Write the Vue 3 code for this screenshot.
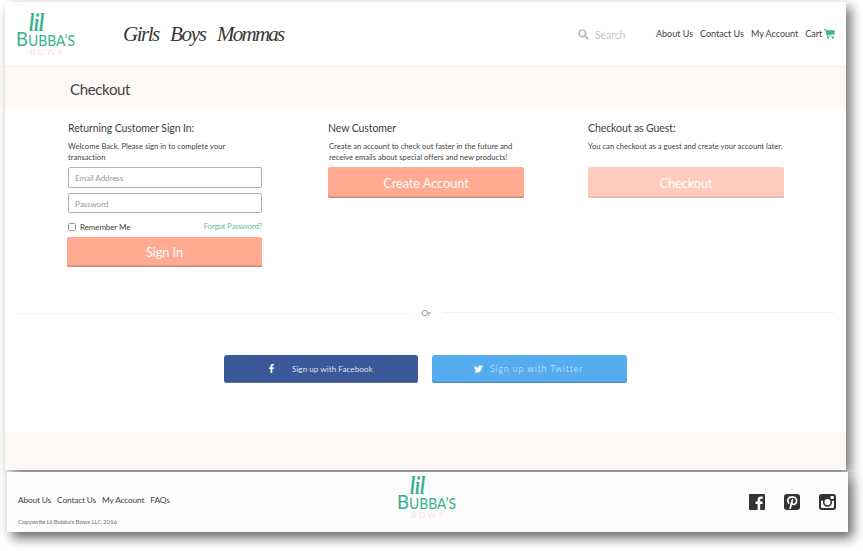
<script setup>
import { h } from 'vue'

const shopLinks = ['Girls', 'Boys', 'Mommas']
const headerLinks = ['About Us', 'Contact Us', 'My Account']
const footerLinks = ['About Us', 'Contact Us', 'My Account', 'FAQs']

const BrandLogo = () =>
  h('svg', { width: 62, height: 48, viewBox: '0 0 62 48', role: 'img' }, [
    h('text', { x: 13, y: 19, textLength: 15, lengthAdjust: 'spacingAndGlyphs', fill: '#36b18c', 'font-family': 'Liberation Serif, serif', 'font-style': 'italic', 'font-weight': 700, 'font-size': 25 }, 'lil'),
    h('g', { fill: '#36b18c', 'font-family': 'Lato, sans-serif' }, [
      h('text', { x: 0, y: 34, textLength: 12, lengthAdjust: 'spacingAndGlyphs', 'font-size': 20 }, 'B'),
      h('text', { x: 12, y: 34, textLength: 47, lengthAdjust: 'spacingAndGlyphs', 'font-size': 15.5 }, 'UBBA’S'),
    ]),
    h('text', { x: 14, y: 42.5, textLength: 32, fill: '#ffdfd6', 'font-family': 'Lato, sans-serif', 'font-size': 8 }, 'BOWS'),
  ])
</script>

<template>
  <div class="canvas">
    <main class="page">
      <header class="top">
        <BrandLogo class="logo" />
        <nav class="shop">
          <a v-for="(l, i) in shopLinks" :key="l" :class="'s' + i">{{ l }}</a>
        </nav>
        <label class="search">
          <svg width="11" height="11" viewBox="0 0 11 11" fill="none" stroke="#bdbdbd">
            <circle cx="4.3" cy="4.3" r="3.3" stroke-width="1.7" />
            <path d="M6.8 6.8L9.7 9.7" stroke-width="2" stroke-linecap="round" />
          </svg>
          <span>Search</span>
        </label>
        <nav class="links">
          <a v-for="l in headerLinks" :key="l">{{ l }}</a>
          <a class="cart">Cart
            <svg width="11" height="10" viewBox="0 0 11 10" fill="#39b18d">
              <path d="M0 .3h2.300l.3 1H10.600V5.300L3.800 6.100l.1.600h6v.900H3L1.600 1.300H0z" />
              <circle cx="4" cy="8.800" r="1" /><circle cx="9" cy="8.800" r="1" />
            </svg>
          </a>
        </nav>
      </header>

      <section class="title"><h1>Checkout</h1></section>

      <section class="options">
        <form class="option signin" @submit.prevent>
          <h2>Returning Customer Sign In:</h2>
          <p>Welcome Back. Please sign in to complete your<br />transaction</p>
          <div class="field first">Email Address</div>
          <div class="field second">Password</div>
          <div class="remember">
            <i class="box"></i><span>Remember Me</span><a>Forgot Password?</a>
          </div>
          <button class="btn">Sign In</button>
        </form>
        <div class="option create">
          <h2>New Customer</h2>
          <p>Create an account to check out faster in the future and<br />receive emails about special offers and new products!</p>
          <button class="btn">Create Account</button>
        </div>
        <div class="option guest">
          <h2>Checkout as Guest:</h2>
          <p>You can checkout as a guest and create your account later.</p>
          <button class="btn pale">Checkout</button>
        </div>
      </section>

      <div class="divider"><hr /><span>Or</span><hr class="right" /></div>

      <section class="social">
        <button class="facebook">
          <svg width="6" height="9" viewBox="0 0 6 9" fill="#fff">
            <path d="M1.5 9V5H0V3.4h1.5V2.2C1.5.8 2.3 0 3.7 0H5v1.6h-.8c-.7 0-.9.3-.9.8v1H5L4.8 5H3.3v4z" />
          </svg>
          <span>Sign up with Facebook</span>
        </button>
        <button class="twitter">
          <svg width="9" height="8" viewBox="0 0 24 20" fill="#fff">
            <path d="M24 2.4a10 10 0 0 1-2.8.8A5 5 0 0 0 23.3.5a10 10 0 0 1-3.1 1.2A4.9 4.9 0 0 0 11.8 6.2 14 14 0 0 1 1.7 1.1a4.9 4.9 0 0 0 1.5 6.5A5 5 0 0 1 1 7a4.9 4.9 0 0 0 3.9 4.9 5 5 0 0 1-2.2.1 4.9 4.9 0 0 0 4.6 3.400A10 10 0 0 1 0 17.400 14 14 0 0 0 21.500 5z" />
          </svg>
          <span>Sign up with Twitter</span>
        </button>
      </section>
      <div class="band"></div>
    </main>

    <footer class="foot">
      <div class="info">
        <nav class="links"><a v-for="l in footerLinks" :key="l">{{ l }}</a></nav>
        <small>Copywrite Lil Bubba’s Bows LLC 2016</small>
      </div>
      <BrandLogo class="footlogo" />
      <div class="icons">
        <svg width="16" height="16" viewBox="0 0 16 16">
          <rect width="16" height="16" rx=".8" fill="#333" />
          <path d="M8.600 16V9.900H6.500V7.500h2.100V5.800c0-2.200 1.300-3.400 3.300-3.400h1.900v2.300h-1.200c-1.100 0-1.400.5-1.400 1.300v1.500h2.500l-.3 2.400h-2.200V16z" fill="#fff" />
        </svg>
        <svg width="16" height="16" viewBox="0 0 16 16">
          <rect width="16" height="16" rx="3" fill="#333" />
          <path d="M4.700 9C2.600 6.300 4.300 2.900 8.200 2.900c3.200 0 4.800 2 4.300 4.600-.5 2.700-2.900 3.800-4.500 2.200M8.500 5.500L6.200 14.200" fill="none" stroke="#fff" stroke-width="1.700" stroke-linecap="round" />
        </svg>
        <svg width="17" height="16" viewBox="0 0 17 16">
          <rect width="17" height="16" rx="2.800" fill="#333" />
          <path d="M2 6.800h2.100a4.600 4.600 0 1 0 8.800 0H15v6a1.200 1.200 0 0 1-1.200 1.200H3.200A1.200 1.200 0 0 1 2 12.800z" fill="#fff" />
          <circle cx="8.500" cy="8" r="3.100" fill="#fff" />
          <rect x="11.600" y="2" width="3.200" height="3.100" rx=".6" fill="#fff" />
        </svg>
      </div>
    </footer>
  </div>
</template>

<style>
body { background: #fff; }
</style>

<style scoped>
* { box-sizing: border-box; }
.canvas { width: 863px; height: 551px; padding: 2px 0 0 5px; overflow: hidden; font-family: Lato, "Liberation Sans", sans-serif; color: #424242; }
.page { width: 841px; height: 468px; background: #fff; box-shadow: 5px 5px 11px rgba(0, 0, 0, .55); }
.top { height: 65px; display: flex; border-bottom: 1px solid #f1efee; }
.logo { margin: 10px 0 0 11px; flex: none; overflow: visible; }
.shop { display: flex; margin: 18px 0 0 45px; width: 165px; font: italic 21px/28px "Liberation Serif", serif; color: #383838; white-space: nowrap; }
.s0 { width: 47px; letter-spacing: -1.5px; }
.s1 { width: 47px; letter-spacing: -1.3px; }
.s2 { letter-spacing: -1.75px; }
.search { display: flex; margin: 27px 0 0 290px; width: 78px; color: #c4c4c4; font-size: 10.5px; line-height: 12px; }
.search span { margin-left: 6px; letter-spacing: -.1px; }
.links { display: flex; gap: 7px; white-space: nowrap; font-size: 9px; line-height: 12px; letter-spacing: 0; }
.top .links { margin-top: 26px; }
.cart { display: flex; gap: 2px; }
.cart svg { margin-top: 1px; }
.title { height: 42px; background: #fef9f6; padding: 12px 0 0 65px; }
h1 { margin: 0; font-size: 15px; line-height: 20px; font-weight: 400; letter-spacing: -.35px; }
.options { height: 197px; display: flex; padding: 12px 0 0 62px; gap: 66px; }
.option { width: 195px; flex: none; }
.option.create { width: 196px; }
.option.guest { width: 196px; margin-left: -2px; }
h2 { margin: 0 0 0 1px; font-size: 10.5px; line-height: 14px; font-weight: 400; white-space: nowrap; letter-spacing: -.09px; }
.create h2, .guest h2 { margin-left: 0; }
p { margin: 6px 0 0 1px; height: 26px; font-size: 7.6px; line-height: 11px; white-space: nowrap; letter-spacing: .02px; }
.guest p { margin-left: 0; }
.field { height: 20px; width: 194px; border: 1px solid #b0b0b0; border-radius: 2px; font-size: 8px; line-height: 20px; padding-left: 6px; color: #999; margin-left: 1px; letter-spacing: -.05px; }
.first { height: 21px; }
.second { margin: 5px 0 0 1px; }
.remember { display: flex; align-items: center; height: 12px; margin-top: 8px; font-size: 8px; letter-spacing: -.1px; }
.box { width: 8px; height: 8px; border: 1px solid #999; border-radius: 1.5px; margin: 0 4px 0 1px; }
.remember a { margin-left: auto; color: #5fc0a1; letter-spacing: -.24px; position: relative; top: -1px; }
button { border: 0; padding: 0; font-family: inherit; display: block; }
.btn { width: 100%; height: 31px; background: #ffaa91; color: #fff; border-radius: 2px; box-shadow: inset 0 -1.5px #c9897a; font-size: 12.8px; line-height: 30px; letter-spacing: -.08px; }
.signin .btn { margin-top: 4px; height: 30px; }
.pale { background: #ffcbbe; box-shadow: inset 0 -1.5px #d9bdb5; }
.divider { display: flex; align-items: center; height: 14px; margin-left: 12px; width: 818px; font-size: 8px; color: #888; }
hr { border: 0; height: 1px; background: #fff0ea; width: 392px; margin: 0; }
.divider span { width: 34px; text-align: center; }
hr.right { width: 392px; position: relative; top: -1px; }
.social { display: flex; gap: 14px; margin: 35px 0 0 219px; }
.social button { width: 194px; height: 28px; border-radius: 3px; display: flex; align-items: center; color: #d9e0ef; font-size: 8.2px; padding-bottom: 1px; }
.social .facebook { background: #3b5998; box-shadow: inset 0 -1px #5c6f98; padding-left: 45px; gap: 17px; }
.social .twitter { width: 195px; background: #55acee; box-shadow: inset 0 -1.5px #4a91c5; padding-left: 42px; gap: 7px; color: #e0f1ff; font-weight: 300; letter-spacing: .88px; font-size: 8.8px; }
.band { height: 38px; background: #fef9f6; margin-top: 49px; }
.foot { position: relative; width: 841px; height: 60px; margin: 2px 0 0 2px; display: flex; background: #fdfdfd; box-shadow: 5px 6px 11px rgba(0, 0, 0, .6); clip-path: inset(0 -20px -25px -20px); }
.info { width: 380px; padding: 22px 0 0 11px; }
.foot .links { font-size: 8.3px; gap: 6px; letter-spacing: -.14px; }
small { display: block; margin-top: 11px; font-size: 6.3px; line-height: 10px; color: #777; letter-spacing: -.17px; white-space: nowrap; }
.footlogo { flex: none; margin: 3px 0 0 10px; overflow: visible; }
.icons { display: flex; gap: 19px; margin: 22px 0 0 290px; }
</style>
